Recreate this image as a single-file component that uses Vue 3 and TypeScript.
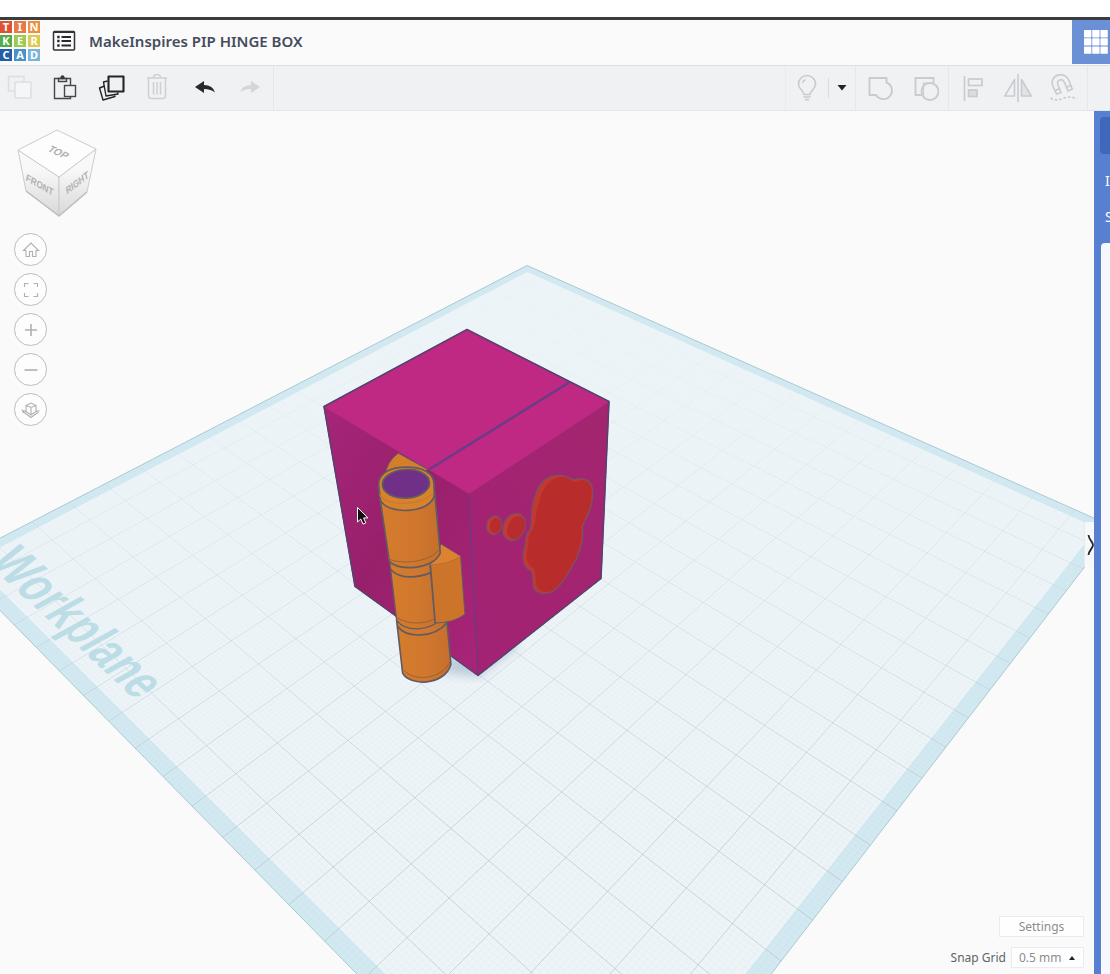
<script setup lang="ts">
import { ref } from 'vue'

interface Tile { letter: string; tone: string }

const tiles: Tile[] = [
  { letter: 'T', tone: 'red' },
  { letter: 'I', tone: 'orange' },
  { letter: 'N', tone: 'amber' },
  { letter: 'K', tone: 'green' },
  { letter: 'E', tone: 'lime' },
  { letter: 'R', tone: 'yellow' },
  { letter: 'C', tone: 'navy' },
  { letter: 'A', tone: 'blue' },
  { letter: 'D', tone: 'sky' },
]

const snap = ref('0.5 mm')

// Perspective projection of the unit square onto the visible workplane.
type Point = [number, number]
const corners: Point[] = [[527, 265], [1115, 527], [589, 1210], [-47, 562]]

function makeProjection(q: Point[]) {
  const [[x0, y0], [x1, y1], [x2, y2], [x3, y3]] = q
  const dx1 = x1 - x2, dx2 = x3 - x2, dx3 = x0 - x1 + x2 - x3
  const dy1 = y1 - y2, dy2 = y3 - y2, dy3 = y0 - y1 + y2 - y3
  const den = dx1 * dy2 - dx2 * dy1
  const g = (dx3 * dy2 - dx2 * dy3) / den
  const h = (dx1 * dy3 - dx3 * dy1) / den
  return (u: number, v: number): string => {
    const w = 1 + g * u + h * v
    const x = ((x1 - x0 + g * x1) * u + (x3 - x0 + h * x3) * v + x0) / w
    const y = ((y1 - y0 + g * y1) * u + (y3 - y0 + h * y3) * v + y0) / w
    return x.toFixed(1) + ' ' + y.toFixed(1)
  }
}

const project = makeProjection(corners)

function square(inset: number): string {
  const a = inset, b = 1 - inset
  return `M${project(a, a)}L${project(b, a)}L${project(b, b)}L${project(a, b)}Z`
}

function grid(count: number): string {
  let d = ''
  for (let i = 1; i < count; i++) {
    const t = i / count
    d += `M${project(t, 0)}L${project(t, 1)}M${project(0, t)}L${project(1, t)}`
  }
  return d
}

const outerPlane = square(0)
const innerPlane = square(0.016)
const majorGrid = grid(20)
const minorGrid = grid(200)
</script>

<template>
  <div class="app">
    <header class="titlebar">
      <a href="#" class="logo" aria-label="Tinkercad">
        <span v-for="t in tiles" :key="t.letter" class="tile" :class="t.tone">{{ t.letter }}</span>
      </a>
      <button class="menu" type="button" aria-label="Designs">
        <svg width="24" height="22" viewBox="0 0 24 22">
          <rect x="1.5" y="1.5" width="21" height="18.5" rx="1" fill="none" stroke="#303236" stroke-width="1.5" />
          <path d="M2 2.2H22" stroke="#303236" stroke-width="1.6" />
          <path d="M9.5 7H19M9.5 11H19M9.5 15.5H19" stroke="#26282c" stroke-width="1.9" />
          <path d="M5.2 7H7.6M5.2 11H7.6M5.2 15.5H7.6" stroke="#26282c" stroke-width="2.4" />
        </svg>
      </button>
      <h1 class="title">MakeInspires PIP HINGE BOX</h1>
      <button class="apps" type="button" aria-label="Dashboard">
        <svg width="24" height="24" viewBox="0 0 24 24" fill="#fff">
          <template v-for="r in 3" :key="r">
            <rect v-for="c in 3" :key="c" :x="(c - 1) * 8.2" :y="(r - 1) * 8.2" width="7.4" height="7.4" rx="0.6" />
          </template>
        </svg>
      </button>
    </header>

    <div class="toolbar" role="toolbar">
      <div class="group edit">
        <button type="button" aria-label="Copy">
          <svg width="28" height="28" viewBox="0 0 28 28" fill="none" stroke="#dcdfe2" stroke-width="1.5">
            <path d="M9 17H2.500V2.500H18V8" /><rect x="9" y="8" width="16" height="16" rx="0.8" fill="#f5f6f8" />
          </svg>
        </button>
        <button type="button" aria-label="Paste">
          <svg width="28" height="28" viewBox="1 0 28 28" fill="none" stroke="#44474c" stroke-width="1.4">
            <path d="M13 24.500H3.500V4.500H19.500V11M13 24.500H19.500V22" />
            <rect x="13.500" y="11.500" width="11" height="11" fill="#f0f1f3" />
            <path d="M7.500 4.500V7.500H15.500V4.500Z" stroke-width="1.5" /><circle cx="11.500" cy="3.200" r="2" fill="#34373c" stroke="none" />
          </svg>
        </button>
        <button type="button" aria-label="Duplicate">
          <svg width="28" height="28" viewBox="0 0 28 28" fill="none" stroke="#222428" stroke-width="1.4" stroke-linejoin="round">
            <path d="M6.500 12L1.500 14L5 26L17 22.500L16.500 21.500" />
            <path d="M9.500 7L5.500 8L8 22L20 20L19.500 18.500" />
            <rect x="10.500" y="2.500" width="15" height="15" stroke-width="2.100" />
          </svg>
        </button>
        <button type="button" aria-label="Delete">
          <svg width="28" height="28" viewBox="1 1 28 28" fill="none" stroke="#cdd0d4" stroke-width="1.500">
            <path d="M4 5H24M10.500 4.500C10.500 0.500 17.500 0.500 17.500 4.500" /><path d="M5.500 5V22.500Q5.500 25.500 8.500 25.500H19.500Q22.500 25.500 22.500 22.500V5M10.500 9V21.500M14 9V21.500M17.500 9V21.500" />
          </svg>
        </button>
        <button type="button" aria-label="Undo">
          <svg width="28" height="28" viewBox="-1 0 28 28" fill="#27292e">
            <path d="M4 13L13 7V11Q22 11 24 18.500Q20 15 13 15V19Z" />
          </svg>
        </button>
        <button type="button" aria-label="Redo">
          <svg width="28" height="28" viewBox="0 0 28 28" fill="#d3d6da">
            <path d="M24 13L15 7V11Q6 11 4 18.500Q8 15 15 15V19Z" />
          </svg>
        </button>
      </div>

      <div class="group visibility">
        <button type="button" class="bulb" aria-label="Show all">
          <svg width="28" height="28" viewBox="0 0 28 28" fill="none" stroke="#c8cbcf" stroke-width="1.700">
            <path d="M11 20.500C11 17 5.500 15.500 5.500 10A8.500 8.500 0 0 1 22.500 10C22.500 15.500 17 17 17 20.500Z" />
            <path d="M9.500 9Q10 6.500 12.500 5.800M10.500 23H17.500M12 25.700H16" />
          </svg>
        </button>
        <button type="button" class="drop" aria-label="Visibility options">
          <svg width="10" height="6" viewBox="0 0 10 6" fill="#222428"><path d="M0.500 0H9.500L5 5.500Z" /></svg>
        </button>
      </div>

      <div class="group">
        <button type="button" aria-label="Group">
          <svg width="28" height="28" viewBox="-2 -1 28 28" fill="none" stroke="#c8cbcf" stroke-width="1.900" stroke-linejoin="round">
            <path d="M2.500 3H19.500V7.500A8.600 8.600 0 1 1 9 20H2.500Z" />
          </svg>
        </button>
        <button type="button" aria-label="Ungroup">
          <svg width="28" height="28" viewBox="-2 -1 28 28" fill="none" stroke="#c8cbcf" stroke-width="1.800">
            <path d="M8.500 20H2.500V3H20.500V8" /><circle cx="17" cy="16.500" r="8.500" /><path d="M20.500 8H10.500V20" stroke-width="1.200" />
          </svg>
        </button>
      </div>

      <div class="group">
        <button type="button" aria-label="Align">
          <svg width="28" height="28" viewBox="-1 -1 28 28" fill="none" stroke="#c8cbcf" stroke-width="1.700">
            <path d="M5.500 1V26" /><rect x="9.500" y="4" width="13.500" height="6.500" /><rect x="9.500" y="15" width="8.500" height="6.500" fill="#dadde1" />
          </svg>
        </button>
        <button type="button" aria-label="Mirror">
          <svg width="28" height="28" viewBox="0 0 28 28" fill="none" stroke="#c8cbcf" stroke-width="1.600" stroke-linejoin="round">
            <path d="M14 0V28" /><path d="M10.500 5.500V22H0.800Z" /><path d="M17.500 5.500V22H27.200Z" fill="#e1e3e6" />
          </svg>
        </button>
        <button type="button" aria-label="Cruise">
          <svg width="28" height="28" viewBox="0 0 28 28" fill="none" stroke="#c8cbcf" stroke-width="1.600">
            <path d="M6.500 20L2.800 12C-1 1 14 -4 18.800 6L22.200 15L18 17L14.500 8.500C12 3.500 6 6 8 11L11 18.500Z" />
            <path d="M5.300 16.600L9.600 14.600M16.500 13.300L20.700 11.500" />
            <path d="M0.500 24Q6 27.500 13 24.500T27 25" stroke-dasharray="2.500 2" />
          </svg>
        </button>
      </div>
      <div class="tail"></div>
    </div>

    <main class="workspace">
      <section class="stage" aria-label="Workplane view">
        <svg class="scene" viewBox="0 110 1094 864" preserveAspectRatio="xMidYMid slice">
          <defs>
            <linearGradient id="leftFace" x1="0" y1="0" x2="1" y2="1">
              <stop offset="0" stop-color="#a6257a" /><stop offset="0.450" stop-color="#98206b" /><stop offset="1" stop-color="#a92479" />
            </linearGradient>
            <linearGradient id="rightFace" x1="1" y1="0" x2="0" y2="1">
              <stop offset="0" stop-color="#a3256f" /><stop offset="1" stop-color="#a32274" />
            </linearGradient>
            <linearGradient id="barrel">
              <stop offset="0" stop-color="#d57c2c" /><stop offset="0.600" stop-color="#cf772e" /><stop offset="1" stop-color="#c56f2c" />
            </linearGradient>
            <linearGradient id="fade" gradientUnits="userSpaceOnUse" x1="0" y1="265" x2="0" y2="974">
              <stop offset="0.100" stop-color="#9fb4bd" stop-opacity="0.030" />
              <stop offset="0.450" stop-color="#9fb4bd" stop-opacity="0.200" />
              <stop offset="0.800" stop-color="#9fb0b8" stop-opacity="0.420" />
            </linearGradient>
            <filter id="soft"><feGaussianBlur stdDeviation="5" /></filter>
          </defs>

          <path :d="outerPlane" fill="#d3e9f1" stroke="#a9c9d3" stroke-width="1" />
          <path :d="innerPlane" fill="#edf4f8" />
          <path :d="minorGrid" fill="none" stroke="url(#fade)" stroke-width="0.500" opacity="0.350" />
          <path :d="majorGrid" fill="none" stroke="url(#fade)" stroke-width="1" />
          <text class="plane-name" transform="matrix(0.735 0.676 -1.240 0.690 -14 562)">Workplane</text>

          <path d="M440 672L478 677L520 645L470 630Z" fill="#9fb3c8" opacity="0.600" filter="url(#soft)" />

          <g stroke-width="1.500" stroke-linejoin="round">
            <path d="M324 406L469 493L478 675L355 586Z" fill="url(#leftFace)" stroke="#9a216d" stroke-width="1" />
            <path d="M609 401L469 493L478 675L601 578Z" fill="url(#rightFace)" stroke="#a3246f" stroke-width="1" />
            <path d="M467 329L609 401L469 493L324 406Z" fill="#bf2983" stroke="#b42a80" stroke-width="1" />
            <path d="M324 406L467 329L609 401L601 578L478 675L355 586Z" fill="none" stroke="#54446f" />
            <path d="M469 493L478 675" fill="none" stroke="#75377d" />
            <path d="M569 382L429 469" fill="none" stroke="#6a3c86" stroke-width="2.600" />
          </g>

          <g transform="translate(310 320) scale(0.333)" stroke="#78506a" stroke-width="4" stroke-linejoin="round">
            <path d="M728 467C695 475 677 515 669 550C661 580 668 607 660 630C643 642 651 662 645 680C635 706 638 742 663 750C675 757 664 790 675 807C690 825 720 822 737 808C774 775 782 742 801 716C810 685 823 665 818 620C828 590 847 572 848 535C853 500 845 476 815 475C797 473 795 484 784 474C764 464 747 461 728 467Z" fill="#c33930" />
            <path d="M746 471C705 482 696 520 686 552C674 583 682 607 666 630C650 652 660 668 652 690C647 715 654 736 672 745C682 760 673 785 683 803C696 820 720 819 737 805C771 773 779 742 799 714C807 684 820 663 815 620C825 590 843 570 845 535C850 502 841 480 815 479C799 480 795 490 785 480C773 470 760 467 746 471Z" fill="#b82d2b" stroke="none" />
            <ellipse cx="613" cy="620" rx="32" ry="42" transform="rotate(24 613 620)" fill="#c53a35" />
            <ellipse cx="619" cy="622" rx="25" ry="36" transform="rotate(24 619 622)" fill="#b82c2e" stroke="none" />
            <ellipse cx="553" cy="615" rx="22" ry="28" transform="rotate(12 553 615)" fill="#c53a35" />
            <ellipse cx="557" cy="616" rx="17" ry="23" transform="rotate(12 557 616)" fill="#b82c2e" stroke="none" />
          </g>

          <g transform="translate(370 440) scale(0.333)" stroke="#625b62" stroke-width="5" stroke-linejoin="round" stroke-linecap="round">
            <path d="M47 105Q48 65 85 38L172 86L150 110Z" fill="#d57d2a" stroke-width="3" />
            <path d="M80 540L98 698C116 738 225 738 243 672L230 535Z" fill="url(#barrel)" />
            <path d="M59 362L80 540C110 578 180 572 215 535L210 345Z" fill="url(#barrel)" stroke-width="4" />
            <path d="M83 558C110 596 195 592 230 548" fill="none" />
            <path d="M63 388C90 418 145 413 184 396" fill="none" />
            <path d="M180 372L215 312L272 348L285 522Q250 548 196 548Z" fill="#cd742b" stroke-width="3" />
            <path d="M213 312L272 348Q235 372 182 374L205 345Z" fill="#dd8230" stroke="none" />
            <path d="M182 374Q240 370 272 348" fill="none" stroke-width="2" stroke="#aa6a35" />
            <path d="M182 376L196 546" fill="none" stroke-width="4" />
            <path d="M25 140L58 362C80 393 190 390 211 338L192 130Z" fill="url(#barrel)" />
            <path d="M26 132C26 95 65 80 110 80C158 80 192 98 192 130L193 166C180 220 50 225 31 178Z" fill="#d9822d" />
            <path d="M30 164C48 200 165 196 190 155" fill="none" stroke="#c87b2f" stroke-width="4" />
            <ellipse cx="108" cy="130" rx="71" ry="43" fill="#713087" transform="rotate(-3 108 130)" />
            <path d="M55 355C90 373 174 368 205 330M80 532C120 556 167 550 192 536M102 690C134 727 216 716 240 665" fill="none" stroke="#915d35" stroke-width="2.500" />
          </g>

          <path d="M357.500 507V521.500L360.800 518.500L363 523.600L365.800 522.400L363.600 517.400H368Z" fill="#111" stroke="#fff" stroke-width="1" />
        </svg>

        <nav class="view-tools" aria-label="View controls">
          <button type="button" class="cube" aria-label="View cube">
            <svg width="86" height="92" viewBox="14 127 86 92">
              <defs>
                <linearGradient id="cubeShade" x1="0" y1="0" x2="0" y2="1">
                  <stop offset="0.300" stop-color="#f8f8f8" /><stop offset="1" stop-color="#d8d8d8" />
                </linearGradient>
              </defs>
              <g stroke="#cccccc" stroke-width="1" stroke-linejoin="round">
                <path d="M18 150L59 177V216L26 191Z" fill="url(#cubeShade)" />
                <path d="M96 149L59 177V216L87 192Z" fill="url(#cubeShade)" />
                <path d="M57 130L96 149L59 177L18 150Z" fill="#fdfdfd" />
                <path d="M26 191L59 216L87 192" fill="none" stroke="#bdbdbd" stroke-width="1.500" />
              </g>
              <g class="face">
                <text transform="translate(56 155) rotate(24) skewX(-18)" font-size="10">TOP</text>
                <text transform="translate(39 188) rotate(30) skewX(18)" font-size="9">FRONT</text>
                <text transform="translate(78 186) rotate(-38) skewX(-24)" font-size="9">RIGHT</text>
              </g>
            </svg>
          </button>
          <button type="button" class="round" aria-label="Home view">
            <svg width="20" height="20" viewBox="0 0 20 20"><path d="M2.500 10.500L10 3L17.500 10.500H15V16.500H11.500V11.500H8.500V16.500H5V10.500Z" /></svg>
          </button>
          <button type="button" class="round" aria-label="Fit all in view">
            <svg width="20" height="20" viewBox="0 0 20 20"><path d="M3.500 7V3.500H7.500M12.500 3.500H16.500V7M16.500 13V16.500H12.500M7.500 16.500H3.500V13" /></svg>
          </button>
          <button type="button" class="round" aria-label="Zoom in">
            <svg width="20" height="20" viewBox="0 0 20 20"><path d="M10 4V16M4 10H16" stroke-width="1.600" /></svg>
          </button>
          <button type="button" class="round" aria-label="Zoom out">
            <svg width="20" height="20" viewBox="0 0 20 20"><path d="M3.500 10H16.500" stroke-width="1.600" /></svg>
          </button>
          <button type="button" class="round" aria-label="Flat view">
            <svg width="20" height="20" viewBox="0 0 20 20"><path d="M5 5.500L10 3L15 5.500V11.500L10 15L5 11.500ZM5 5.500L10 7.500L15 5.500M10 7.500V15M1 9.500L2.500 13M5 11.500L1.500 10.500M15 11.500L18.500 10.500M2.500 12L10 17.500L17.500 12" /></svg>
          </button>
        </nav>

        <button type="button" class="collapse" aria-label="Hide panel">
          <svg width="9" height="22" viewBox="0 0 9 22"><path d="M3.500 1C4 6 8 8 8 11S4 16 3.500 21" fill="none" stroke="#25282c" stroke-width="1.800" /></svg>
        </button>

        <div class="grid-options">
          <button type="button" class="settings">Settings</button>
          <div class="snap">
            <label for="snap">Snap Grid</label>
            <span class="picker">
              <select id="snap" v-model="snap"><option>0.5 mm</option></select>
              <svg width="6" height="4" viewBox="0 0 6 4"><path d="M0 4L3 0L6 4Z" fill="#222" /></svg>
            </span>
          </div>
        </div>
      </section>

      <aside class="panel">
        <div class="chooser"></div>
        <span class="cut">I</span>
        <span class="cut">S</span>
        <div class="shapes"></div>
      </aside>
    </main>
  </div>
</template>

<style>
body { margin: 0; }
</style>

<style scoped>
.app {
  display: flex;
  flex-direction: column;
  min-height: 100vh;
  box-sizing: border-box;
  padding-top: 17px;
  overflow: hidden;
  background: #fff;
  font-family: "Noto Sans", "Open Sans", sans-serif;
  color: #3c4250;
}
button {
  margin: 0;
  padding: 0;
  border: 0;
  background: none;
  font: inherit;
  color: inherit;
  cursor: pointer;
}
svg { display: block; }

.titlebar {
  display: flex;
  align-items: flex-start;
  height: 45px;
  border-top: 3px solid #3b3c40;
  border-bottom: 1px solid #dcdee2;
  background: #fafafb;
}
.logo {
  display: grid;
  grid-template-columns: repeat(3, 12px);
  grid-auto-rows: 12px;
  gap: 2px;
  margin-top: 1px;
  text-decoration: none;
}
.tile {
  display: grid;
  place-items: center;
  color: #fff;
  font-size: 11px;
  line-height: 12px;
  font-weight: 700;
}
.red { background: #dc5335; }
.orange { background: #e87b45; }
.amber { background: #ea9142; }
.green { background: #56ad48; }
.lime { background: #9dcb4c; }
.yellow { background: #dccb50; }
.navy { background: #235da8; }
.blue { background: #4a91c8; }
.sky { background: #7cb4d9; }
.menu {
  margin-left: 12px;
  margin-top: 10px;
}
.title {
  flex: 1;
  margin: 11px 0 0 13px;
  font-size: 15px;
  line-height: 20px;
  font-weight: 600;
  color: #454c5c;
  white-space: nowrap;
}
.apps {
  display: flex;
  align-items: center;
  justify-content: flex-end;
  box-sizing: border-box;
  width: 38px;
  height: 44px;
  padding-right: 2px;
  background: #6a90d6;
}

.toolbar {
  display: flex;
  height: 44px;
  border-bottom: 1px solid #e3e5e8;
  background: #f0f1f3;
}
.group {
  display: flex;
  border-right: 1px solid #e5e7ea;
}
.group button {
  display: grid;
  place-items: center;
  width: 46px;
}
.edit {
  margin-right: auto;
  margin-left: -3px;
}
.visibility { border-left: 1px solid #e8eaec; }
.group .bulb { width: 42px; }
.group .drop {
  width: 27px;
  height: 20px;
  align-self: center;
  border-left: 1px solid #d9dbdf;
}
.tail { width: 22px; }

.workspace {
  flex: 1;
  display: flex;
}
.stage {
  position: relative;
  flex: 1;
  display: flex;
  flex-direction: column;
  justify-content: space-between;
  overflow: hidden;
  background: #fafafa;
}
.scene {
  position: absolute;
  inset: 0;
  width: 100%;
  height: 100%;
}
.plane-name {
  font-family: "Liberation Sans", Arial, sans-serif;
  font-size: 40px;
  font-weight: 700;
  fill: #bddde6;
}
.view-tools {
  position: relative;
  display: flex;
  flex-direction: column;
  align-items: flex-start;
  gap: 7px;
  padding: 16px 14px;
}
.cube { margin-bottom: 7px; }
.face text {
  font-family: "Liberation Sans", Arial, sans-serif;
  font-weight: 700;
  text-anchor: middle;
  fill: #b0b0b2;
}
.round {
  display: grid;
  place-items: center;
  box-sizing: border-box;
  width: 33px;
  height: 33px;
  border: 1px solid #bcbcbc;
  border-radius: 50%;
  background: #fdfdfd;
}
.round svg {
  fill: none;
  stroke: #b0b0b0;
  stroke-width: 1.1;
}
.collapse {
  position: absolute;
  top: 411px;
  right: 0;
  display: grid;
  place-items: center;
  width: 10px;
  height: 45px;
  background: #f6f8f9;
  border-left: 1px solid #e6eaec;
}
.grid-options {
  position: relative;
  display: flex;
  flex-direction: column;
  align-items: flex-end;
  gap: 10px;
  padding: 0 10px 6px;
  font-size: 12px;
  line-height: 20px;
}
.settings,
.picker {
  box-sizing: border-box;
  height: 21px;
  border: 1px solid #e9ebed;
  background: #fefefe;
  color: #8b8d92;
}
.settings { width: 85px; }
.snap {
  display: flex;
  align-items: center;
  gap: 5px;
  color: #606368;
}
.picker {
  display: flex;
  align-items: center;
  width: 73px;
  padding: 0 8px 0 7px;
}
.picker select {
  flex: 1;
  min-width: 0;
  padding: 0;
  border: 0;
  appearance: none;
  background: none;
  font: inherit;
  color: inherit;
}

.panel {
  display: flex;
  flex-direction: column;
  box-sizing: border-box;
  width: 16px;
  padding: 6px 0 0 6px;
  overflow: hidden;
  background: #5880d1;
  color: #fff;
}
.chooser {
  height: 37px;
  margin-bottom: 9px;
  border-radius: 4px 0 0 4px;
  background: #3f67bb;
}
.cut {
  margin-left: 5px;
  font-size: 14px;
  line-height: 36px;
}
.shapes {
  flex: 1;
  margin-left: 1px;
  margin-top: 8px;
  border-radius: 4px 0 0 0;
  background: #f6f8fd;
}
</style>
